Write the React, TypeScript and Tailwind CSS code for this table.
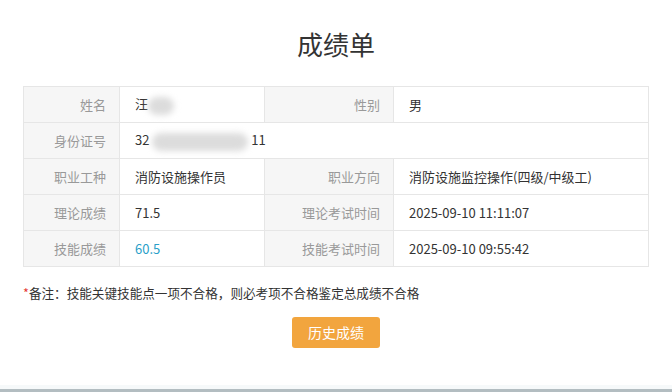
import React from "react";

const font = { fontFamily: '"Noto Sans CJK SC", "Noto Sans", sans-serif' };

function Blur({ w }: { w: number }) {
  return (
    <span
      className="inline-block h-[18px] align-middle rounded-full bg-[#dcdcdc] blur-[3px]"
      style={{ width: w }}
    />
  );
}

const label = "bg-[#f6f6f6] text-right pr-[13px] text-[#999] font-normal";
const cell = "pl-[15px] text-[#333]";

export default function App() {
  return (
    <div className="w-[672px] h-[392px] bg-white flex flex-col" style={font}>
      <div className="flex-1 flex flex-col items-center">
        <h1 className="mt-[26px] text-[26px] leading-[36px] text-[#333] font-normal">成绩单</h1>

        <table className="mt-[24px] w-[626px] border-collapse table-fixed text-[13px]">
          <colgroup>
            <col className="w-[96px]" />
            <col className="w-[145px]" />
            <col className="w-[129px]" />
            <col />
          </colgroup>
          <tbody>
            <tr className="h-[36px]">
              <th className={`border border-[#e6e6e6] ${label}`}>姓名</th>
              <td className={`border border-[#e6e6e6] ${cell}`}>
                汪<Blur w={26} />
              </td>
              <th className={`border border-[#e6e6e6] ${label}`}>性别</th>
              <td className={`border border-[#e6e6e6] ${cell}`}>男</td>
            </tr>
            <tr className="h-[36px]">
              <th className={`border border-[#e6e6e6] ${label}`}>身份证号</th>
              <td colSpan={3} className={`border border-[#e6e6e6] ${cell}`}>
                32 <Blur w={96} /> 11
              </td>
            </tr>
            <tr className="h-[36px]">
              <th className={`border border-[#e6e6e6] ${label}`}>职业工种</th>
              <td className={`border border-[#e6e6e6] ${cell}`}>消防设施操作员</td>
              <th className={`border border-[#e6e6e6] ${label}`}>职业方向</th>
              <td className={`border border-[#e6e6e6] ${cell}`}>消防设施监控操作(四级/中级工)</td>
            </tr>
            <tr className="h-[36px]">
              <th className={`border border-[#e6e6e6] ${label}`}>理论成绩</th>
              <td className={`border border-[#e6e6e6] ${cell}`}>71.5</td>
              <th className={`border border-[#e6e6e6] ${label}`}>理论考试时间</th>
              <td className={`border border-[#e6e6e6] ${cell}`}>2025-09-10 11:11:07</td>
            </tr>
            <tr className="h-[36px]">
              <th className={`border border-[#e6e6e6] ${label}`}>技能成绩</th>
              <td className={`border border-[#e6e6e6] pl-[15px] text-[#2a9fc9]`}>60.5</td>
              <th className={`border border-[#e6e6e6] ${label}`}>技能考试时间</th>
              <td className={`border border-[#e6e6e6] ${cell}`}>2025-09-10 09:55:42</td>
            </tr>
          </tbody>
        </table>

        <p className="self-start ml-[23px] mt-[17px] text-[12.6px] leading-[18px] text-[#333]">
          <span className="text-[#e53935]">*</span>备注：技能关键技能点一项不合格，则必考项不合格鉴定总成绩不合格
        </p>

        <button className="mt-[15px] w-[88px] h-[31px] rounded-[3px] bg-[#f2a53e] text-white text-[14px]">
          历史成绩
        </button>
      </div>
      <div className="h-[4px] bg-[#f6f9fa]" />
      <div className="h-[3px] bg-[#b3bdc1]" />
    </div>
  );
}
